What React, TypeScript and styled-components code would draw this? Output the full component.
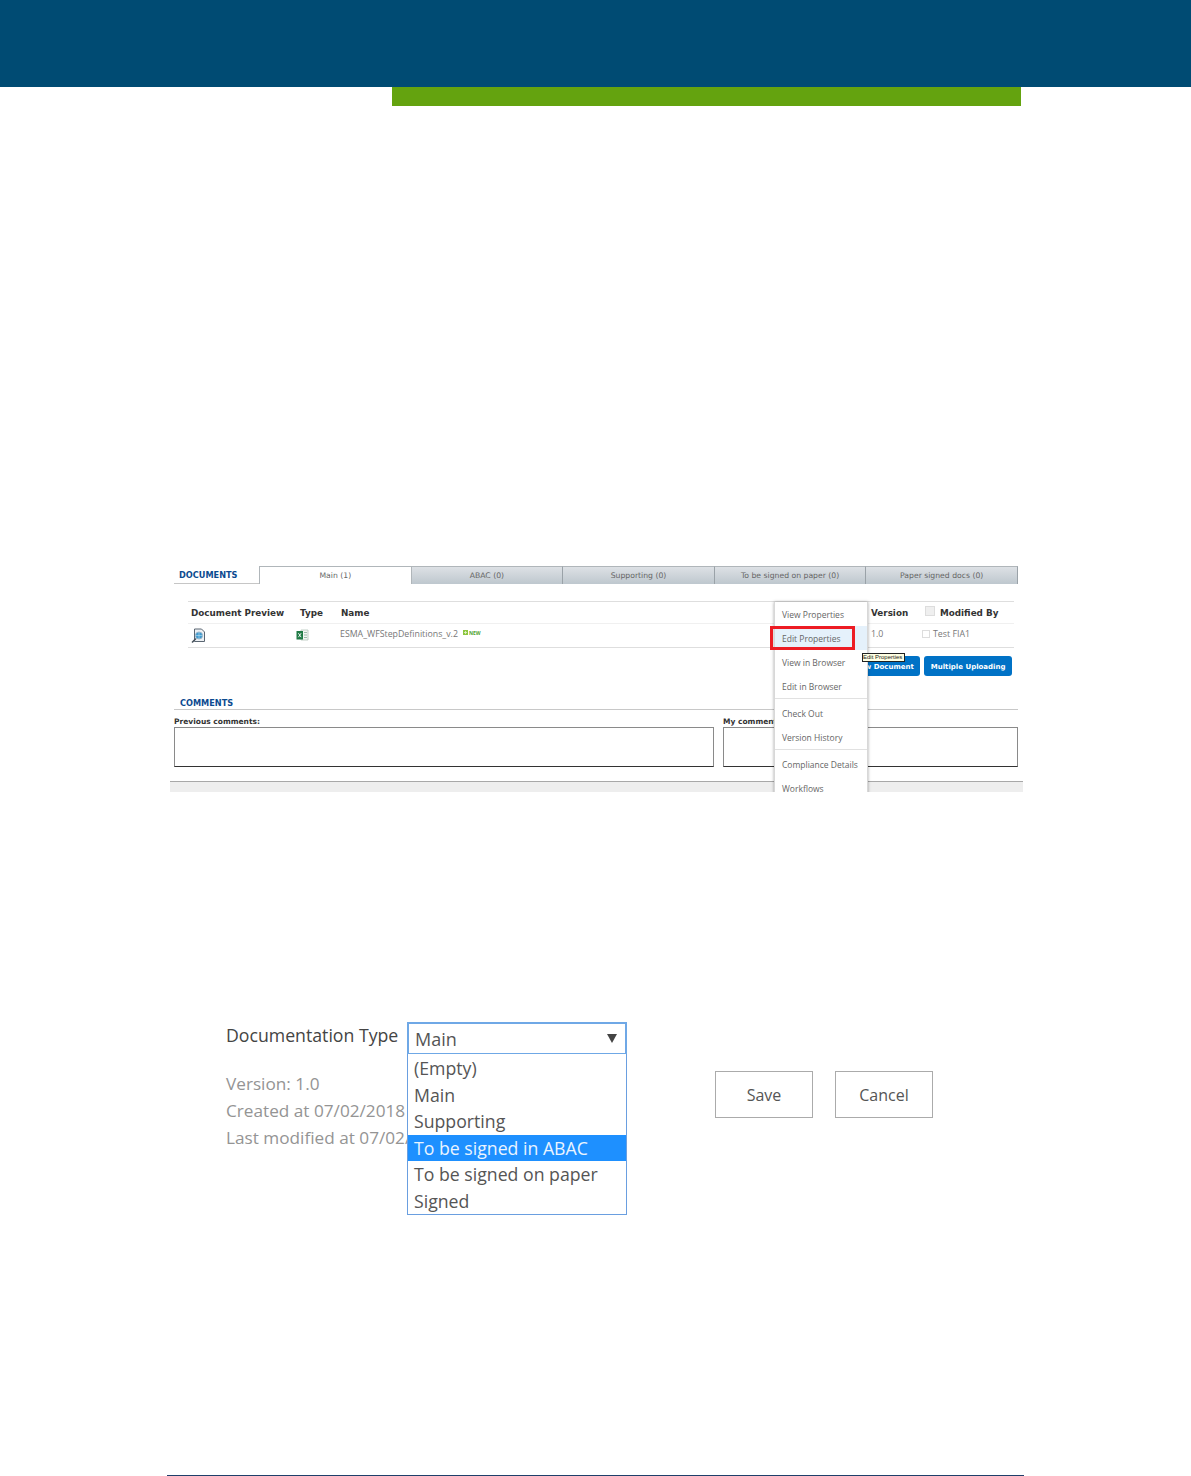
import React from "react";
import styled, { createGlobalStyle } from "styled-components";

const GlobalStyle = createGlobalStyle`
  html, body {
    margin: 0;
    padding: 0;
    background: #fff;
  }
`;

const tabs = [
  { label: "Main (1)", active: true },
  { label: "ABAC (0)" },
  { label: "Supporting (0)" },
  { label: "To be signed on paper (0)" },
  { label: "Paper signed docs (0)" },
];

const options = ["(Empty)", "Main", "Supporting", "To be signed in ABAC", "To be signed on paper", "Signed"];

const App = () => {
  return (
    <Page>
      <GlobalStyle />
      <Banner />
      <Accent />

      <Shot>
        <TabRow>
          <DocTitle>DOCUMENTS</DocTitle>
          {tabs.map((t) => (
            <Tab key={t.label} $active={t.active}>{t.label}</Tab>
          ))}
        </TabRow>

        <Table>
          <HeadRow>
            <PreviewCell>Document Preview</PreviewCell>
            <TypeCell>Type</TypeCell>
            <NameCell>Name</NameCell>
            <VersionCell>Version</VersionCell>
            <CheckCell><HeadCheck /></CheckCell>
            <ModifiedCell>Modified By</ModifiedCell>
          </HeadRow>
          <BodyRow>
            <PreviewCell>
              <svg width="15" height="15" viewBox="0 0 15 15">
                <path d="M3.5 1h7l3 3v9.5h-10z" fill="#eef1f4" stroke="#5a6672" strokeWidth="1" />
                <circle cx="8" cy="7.5" r="3.6" fill="#3f9bd0" stroke="#9fb4c4" strokeWidth="0.8" />
                <path d="M4.4 7.5h7.2M8 4v7" stroke="#bfe0f0" strokeWidth="0.6" />
                <path d="M4.5 11l-3 3" stroke="#45505a" strokeWidth="1.6" strokeLinecap="round" />
              </svg>
            </PreviewCell>
            <TypeCell>
              <ExcelIcon width="13" height="12" viewBox="0 0 13 12">
                <path d="M5 1h7v10H5z" fill="#f2f6f3" stroke="#b4c4ba" strokeWidth="0.8" />
                <path d="M8 3.500h3M8 6h3M8 8.500h3" stroke="#9dbba8" strokeWidth="1" />
                <rect x="0.500" y="2" width="6.500" height="8.500" fill="#1f7a45" />
                <path d="M2.400 4.200l2.700 4M5.100 4.200l-2.700 4" stroke="#fff" strokeWidth="0.9" />
              </ExcelIcon>
            </TypeCell>
            <FileName>
              ESMA_WFStepDefinitions_v.2
              <NewBadge>
                <svg width="5" height="5" viewBox="0 0 5 5">
                  <rect width="5" height="5" fill="#8cc63f" />
                  <path d="M2.500 1v3M1 2.500h3" stroke="#e7f5d0" strokeWidth="0.8" />
                </svg>
                NEW
              </NewBadge>
            </FileName>
            <VersionValue>1.0</VersionValue>
            <CheckCell><RowCheck /></CheckCell>
            <ModifiedValue>Test FIA1</ModifiedValue>
          </BodyRow>
        </Table>

        <Actions>
          <BlueButton>New Document</BlueButton>
          <BlueButton>Multiple Uploading</BlueButton>
        </Actions>

        <CommentsTitle>COMMENTS</CommentsTitle>
        <CommentsGrid>
          <CommentCol>
            <CommentLabel>Previous comments:</CommentLabel>
            <CommentBox />
          </CommentCol>
          <CommentCol>
            <CommentLabel>My comments:</CommentLabel>
            <CommentBox />
          </CommentCol>
        </CommentsGrid>
        <GreyStrip />

        <ContextMenu>
          <MenuItem>View Properties</MenuItem>
          <MenuItem $hover>Edit Properties</MenuItem>
          <MenuItem>View in Browser</MenuItem>
          <MenuItem>Edit in Browser</MenuItem>
          <MenuLine />
          <MenuItem>Check Out</MenuItem>
          <MenuItem>Version History</MenuItem>
          <MenuLine />
          <MenuItem>Compliance Details</MenuItem>
          <MenuItem>Workflows</MenuItem>
        </ContextMenu>
        <RedMark />
        <Hint>Edit Properties</Hint>
      </Shot>

      <FormShot>
        <TypeRow>
          <TypeLabel>Documentation Type</TypeLabel>
          <SelectWrap>
            <SelectBox>
              Main
              <svg width="10" height="9" viewBox="0 0 10 9">
                <path d="M0 0h10L5 9z" fill="#444" />
              </svg>
            </SelectBox>
            <OptionList>
              {options.map((o) => (
                <Option key={o} $selected={o === "To be signed in ABAC"}>{o}</Option>
              ))}
            </OptionList>
          </SelectWrap>
        </TypeRow>
        <MetaRow>
          <Meta>
            <div>Version: 1.0</div>
            <div>Created at 07/02/2018</div>
            <div>Last modified at 07/02/2018 10:47:00 by Test FIA1.</div>
          </Meta>
          <FormButtons>
            <FormButton>Save</FormButton>
            <FormButton>Cancel</FormButton>
          </FormButtons>
        </MetaRow>
      </FormShot>

      <FootLine />
    </Page>
  );
};

const Page = styled.div`
  width: 1191px;
  height: 1476px;
  overflow: hidden;
`;
const Banner = styled.div`
  height: 87px;
  background: #004b73;
`;
const Accent = styled.div`
  width: 629px;
  height: 19px;
  margin-left: 392px;
  background: #64a30f;
`;

const Shot = styled.div`
  position: relative;
  width: 853px;
  height: 226px;
  margin: 460px 0 0 170px;
  overflow: hidden;
  font-family: "DejaVu Sans", sans-serif;
`;
const TabRow = styled.div`
  display: flex;
  height: 18px;
  margin: 0 5px 0 4px;
`;
const DocTitle = styled.div`
  width: 85px;
  box-sizing: border-box;
  padding: 4px 0 0 5px;
  border-bottom: 1px solid #c6c6c6;
  color: #0b4a90;
  font-size: 8.200px;
  font-weight: bold;
  line-height: 11px;
`;
const Tab = styled.div<{ $active?: boolean }>`
  flex: 1;
  box-sizing: border-box;
  text-align: center;
  font-size: 7.700px;
  line-height: 17px;
  color: #666;
  border-right: 1px solid #9aa2a8;
  border-top: 1px solid #b0b6ba;
  background: ${(p) => (p.$active ? "#fff" : "linear-gradient(#dde1e5, #bec7ce)")};
  ${(p) => p.$active && "border-left: 1px solid #b0b6ba; border-right: 1px solid #b0b6ba;"}
`;

const Table = styled.div`
  margin: 17px 9px 0 18px;
  border-top: 1px solid #dedede;
  border-bottom: 1px solid #dedede;
`;
const HeadRow = styled.div`
  display: flex;
  align-items: center;
  height: 21px;
  border-bottom: 1px solid #f0f0f0;
  color: #333;
  font-size: 8.800px;
  font-weight: bold;
`;
const BodyRow = styled.div`
  display: flex;
  align-items: center;
  height: 23px;
  color: #777;
  font-size: 8.800px;
  font-family: "Open Sans", sans-serif;
`;
const PreviewCell = styled.div`
  display: flex;
  width: 109px;
  padding-left: 3px;
`;
const TypeCell = styled.div`
  display: flex;
  width: 41px;
`;
const ExcelIcon = styled.svg`
  margin: -2px 0 0 -4px;
`;
const NameCell = styled.div`
  width: 530px;
`;
const FileName = styled.div`
  display: flex;
  align-items: center;
  width: 530px;
  margin: -4px 1px 0 -1px;
`;
const NewBadge = styled.span`
  display: inline-flex;
  align-items: center;
  gap: 1px;
  margin: -2px 0 0 5px;
  color: #4da32f;
  font-size: 5px;
  font-weight: bold;
`;
const VersionCell = styled.div`
  width: 54px;
`;
const VersionValue = styled.div`
  width: 51px;
  margin-top: -4px;
`;
const CheckCell = styled.div`
  display: flex;
  width: 15px;
  margin-top: -3px;
`;
const HeadCheck = styled.span`
  width: 8px;
  height: 8px;
  border: 1px solid #ddd;
  background: #efefef;
`;
const RowCheck = styled.span`
  width: 6px;
  height: 6px;
  border: 1px solid #ddd;
`;
const ModifiedCell = styled.div``;
const ModifiedValue = styled.div`
  margin: -4px 0 0 -4px;
`;

const Actions = styled.div`
  display: flex;
  justify-content: flex-end;
  gap: 4px;
  margin: 8px 11px 0 0;
`;
const BlueButton = styled.div`
  box-sizing: border-box;
  height: 20px;
  padding: 0 6.500px;
  border-radius: 3px;
  background: #0072c6;
  color: #fff;
  font-size: 7px;
  font-weight: bold;
  line-height: 22px;
`;

const CommentsTitle = styled.div`
  margin: 21px 5px 0 4px;
  padding-left: 6px;
  height: 12px;
  border-bottom: 1px solid #c8c8c8;
  color: #0b4a90;
  font-size: 8.200px;
  font-weight: bold;
  line-height: 12px;
`;
const CommentsGrid = styled.div`
  display: grid;
  grid-template-columns: 540px 295px;
  column-gap: 9px;
  margin: 6px 0 0 4px;
`;
const CommentCol = styled.div`
  display: flex;
  flex-direction: column;
`;
const CommentLabel = styled.div`
  height: 11px;
  color: #333;
  font-size: 7.500px;
  font-weight: bold;
  line-height: 11px;
`;
const CommentBox = styled.div`
  box-sizing: border-box;
  height: 40px;
  border: 1px solid #8a8a8a;
  border-bottom-color: #333;
`;
const GreyStrip = styled.div`
  height: 11px;
  margin-top: 14px;
  border-top: 1px solid #a8a8a8;
  background: #eeeeee;
`;

const ContextMenu = styled.div`
  position: absolute;
  top: 36px;
  left: 604px;
  width: 94px;
  height: 210px;
  box-sizing: border-box;
  background: #fff;
  border: solid #d8d8d8;
  border-width: 0 1px;
  box-shadow: 0 0 3px rgba(0, 0, 0, 0.35);
  font-family: "Open Sans", sans-serif;
`;
const MenuItem = styled.div<{ $hover?: boolean }>`
  height: 24px;
  padding-left: 7px;
  color: #666;
  font-size: 8.500px;
  line-height: 25px;
  background: ${(p) => (p.$hover ? "#e5f1fb" : "transparent")};
`;
const MenuLine = styled.div`
  height: 1px;
  margin: 0 0 2px;
  background: #e1e1e1;
`;
const RedMark = styled.div`
  position: absolute;
  top: 60px;
  left: 600px;
  width: 85px;
  height: 24px;
  box-sizing: border-box;
  border: 3px solid #ed1c24;
`;
const Hint = styled.div`
  position: absolute;
  top: 87px;
  left: 692px;
  box-sizing: border-box;
  width: 43px;
  height: 9px;
  border: 1px solid #222;
  background: #ffffe1;
  color: #222;
  font-family: "Liberation Sans", sans-serif;
  font-size: 6px;
  line-height: 7px;
  white-space: nowrap;
  overflow: hidden;
`;

const FormShot = styled.div`
  margin: 230px 0 0 226px;
  font-family: "Open Sans", sans-serif;
  font-size: 17.700px;
`;
const TypeRow = styled.div`
  display: flex;
  align-items: flex-start;
`;
const TypeLabel = styled.div`
  width: 181px;
  color: #444;
  line-height: 26px;
`;
const SelectWrap = styled.div`
  position: relative;
  width: 220px;
`;
const SelectBox = styled.div`
  display: flex;
  align-items: center;
  justify-content: space-between;
  box-sizing: border-box;
  height: 32px;
  padding: 0 8px 0 6px;
  border: 2px solid #6fa8e6;
  border-bottom-width: 1px;
  color: #555;
  font-size: 18px;
  line-height: 30px;
`;
const OptionList = styled.div`
  position: absolute;
  z-index: 1;
  top: 32px;
  left: 0;
  right: 0;
  box-sizing: border-box;
  height: 161px;
  padding-top: 1px;
  background: #fff;
  border: 1px solid #6a9fe0;
  border-top: 0;
`;
const Option = styled.div<{ $selected?: boolean }>`
  height: 26.500px;
  padding-left: 6px;
  color: ${(p) => (p.$selected ? "#eaf4ff" : "#555")};
  background: ${(p) => (p.$selected ? "#1e90ff" : "transparent")};
  line-height: 26.500px;
  white-space: nowrap;
`;
const MetaRow = styled.div`
  display: flex;
  margin-top: 17px;
`;
const Meta = styled.div`
  width: 489px;
  margin-top: -1px;
  color: #949494;
  font-size: 17.200px;
  line-height: 27px;
  white-space: nowrap;
`;
const FormButtons = styled.div`
  display: flex;
  gap: 22px;
`;
const FormButton = styled.div`
  box-sizing: border-box;
  width: 98px;
  height: 47px;
  border: 1px solid #ababab;
  color: #555;
  font-size: 16px;
  line-height: 46px;
  text-align: center;
`;
const FootLine = styled.div`
  width: 857px;
  height: 1px;
  margin: 324px 0 0 167px;
  background: #1f3f6a;
`;

export default App;
